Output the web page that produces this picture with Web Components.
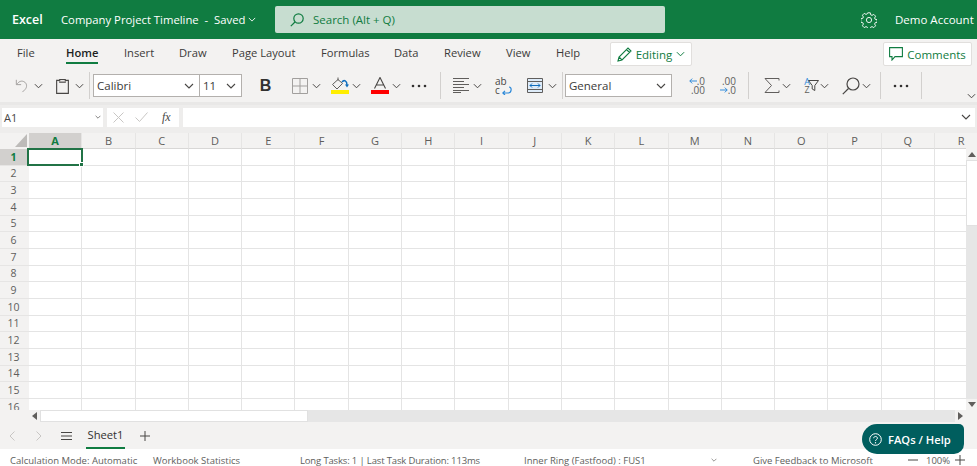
<!DOCTYPE html>
<html lang="en">
<head>
<meta charset="utf-8">
<title>Excel</title>
<style>
  html, body { margin: 0; height: 466px; overflow: hidden; background: #f3f2f1; }
  body { font-family: "Open Sans", "Noto Sans", "Liberation Sans", sans-serif; color: #323130; }
</style>
</head>
<body>
<excel-app></excel-app>
<script>
// dibujos de los iconos, cada uno en su propio viewBox
const ICONS = {
  chevron: [10, 6, '<path d="M1 1l4 4 4-4" fill="none" stroke="currentColor" stroke-width="1.1"/>'],
  undo: [16, 16, '<path d="M1.5 1.5v5.5h5.5M2 7c2-3.5 5-4.800 8-3.500 4 1.800 4 6.500 1.500 9L8.500 15.500" fill="none" stroke="#a19f9d" stroke-width="1.100"/>'],
  paste: [14, 17, '<path d="M4 2.500H.7v14h12.600v-14H10M4 1.500h6v3H4z" fill="none" stroke="#484644" stroke-width="1.200"/><path d="M3 3.500h8" stroke="#a19f9d"/>'],
  borders: [16, 16, '<path d="M.5.500h15v15H.500zM8 .5v15M.5 8h15" fill="none" stroke="#a19f9d" stroke-width="1"/>'],
  fill: [18, 17, '<path d="M7 .5v3M7 2.500l-5.500 5 4.500 4.500 5.500-5.500z" fill="none" stroke="#605e5c"/><path d="M11 5c2-2.500 5-1.500 5 3" fill="none" stroke="#106ebe" stroke-width="1.500"/><path d="M14 7.500l2 3 2-3z" fill="#106ebe"/><rect y="13" width="18" height="4" fill="#ffee00"/>'],
  fontcolor: [18, 17, '<path d="M3.500 11.500L9 .5l5.500 11M5.500 8h7" fill="none" stroke="#484644" stroke-width="1.100"/><rect y="13" width="18" height="4" fill="#f00"/>'],
  dots: [16, 4, '<circle cx="2" cy="2" r="1.300" fill="currentColor"/><circle cx="8" cy="2" r="1.300" fill="currentColor"/><circle cx="14" cy="2" r="1.300" fill="currentColor"/>'],
  align: [16, 15, '<path d="M0 .5h16M0 3.500h11M0 6.500h16M0 9.500h11M0 12.500h16M0 14.500h8" stroke="#605e5c" fill="none"/>'],
  merge: [16, 15, '<path d="M.5.500h15v14H.500z" fill="#deecf9" stroke="#605e5c"/><path d="M.5 3.500h15M.5 11.500h15" stroke="#605e5c"/><path d="M3 7.500h10M5 5.500l-2 2 2 2M11 5.500l2 2-2 2" fill="none" stroke="#106ebe"/>'],
  wrapArrow: [10, 9, '<path d="M1 7h5c4 0 4-6 1-6M3 4.800L.8 7 3 9" fill="none" stroke="#2b88d8" stroke-width="1.200"/>'],
  arrowL: [10, 7, '<path d="M10 3.500H1M4 .5l-3 3 3 3" fill="none" stroke="#2b88d8" stroke-width="1.200"/>'],
  arrowR: [10, 7, '<path d="M0 3.500h9M6 .5l3 3-3 3" fill="none" stroke="#2b88d8" stroke-width="1.200"/>'],
  sigma: [16, 15, '<path d="M15 2.500V.5H1l6.500 7-6.500 7h14v-2" fill="none" stroke="#605e5c"/>'],
  filter: [11, 11, '<path d="M.5.500h10L6.800 5.500v5l-2.600-1.500V5.500z" fill="none" stroke="#484644"/>'],
  find: [18, 18, '<circle cx="11" cy="7" r="6" fill="none" stroke="#484644" stroke-width="1.200"/><path d="M6.500 11.500L.8 17.200" stroke="#484644" stroke-width="1.200"/>'],
  search: [14, 14, '<circle cx="8.500" cy="5.500" r="4.700" fill="none" stroke="#107c41" stroke-width="1.200"/><path d="M5 9L.8 13.200" stroke="#107c41" stroke-width="1.200"/>'],
  gear: [16, 16, '<path d="M6.700.800h2.600l.4 2 1.300.6 1.800-1 1.800 1.800-1 1.800.6 1.300 2 .4v2.600l-2 .4-.6 1.300 1 1.800-1.800 1.800-1.800-1-1.300.6-.4 2H6.700l-.4-2-1.300-.6-1.800 1-1.800-1.800 1-1.800-.6-1.300-2-.4V6.700l2-.4.6-1.300-1-1.800 1.800-1.800 1.800 1 1.300-.6z" fill="none" stroke="#fff" stroke-width=".9"/><circle cx="8" cy="8" r="2.600" fill="none" stroke="#fff" stroke-width=".9"/>'],
  pencil: [15, 15, '<path d="M1 14l1-4L11 1l3 3-9 9zM2 10l3 3M9.500 2.500l3 3" fill="none" stroke="#107c41" stroke-width="1.100"/>'],
  comment: [14, 14, '<path d="M.6.600h12.800v9H6L3 13V9.600H.6z" fill="none" stroke="#107c41" stroke-width="1.100"/>'],
  cross: [11, 11, '<path d="M.5.500l10 10M10.500.500l-10 10" stroke="#c8c6c4" fill="none"/>'],
  check: [13, 10, '<path d="M.5 5.500l4 4 8-9" stroke="#c8c6c4" fill="none"/>'],
  left: [6, 10, '<path d="M5.500.5L1 5l4.500 4.500" fill="none" stroke="#c8c6c4"/>'],
  right: [6, 10, '<path d="M.5.500L5 5 .5 9.500" fill="none" stroke="#c8c6c4"/>'],
  menu: [11, 8, '<path d="M0 .5h11M0 4h11M0 7.500h11" stroke="#484644"/>'],
  plus: [10, 10, '<path d="M5 0v10M0 5h10" stroke="#484644"/>'],
  minus: [10, 10, '<path d="M0 5h10" stroke="#484644"/>'],
  help: [13, 13, '<circle cx="6.500" cy="6.500" r="5.800" fill="none" stroke="#fff"/><path d="M4.700 5.200c0-2.300 3.700-2.300 3.700 0 0 1.300-1.900 1.400-1.900 2.800" fill="none" stroke="#fff"/><circle cx="6.500" cy="9.700" r=".7" fill="#fff"/>'],
  up: [8, 5, '<path d="M0 5l4-5 4 5z" fill="currentColor"/>'],
  down: [8, 5, '<path d="M0 0l4 5 4-5z" fill="currentColor"/>'],
  back: [5, 8, '<path d="M5 0L0 4l5 4z" fill="currentColor"/>'],
  fwd: [5, 8, '<path d="M0 0l5 4-5 4z" fill="currentColor"/>'],
};

class ExcelIcon extends HTMLElement {
  connectedCallback() {
    const name = this.getAttribute("name");
    const [w, h, body] = ICONS[name];
    const dw = this.getAttribute("w") || w;
    const dh = this.getAttribute("h") || h;
    this.attachShadow({ mode: "open" }).innerHTML = `
      <style>:host { display: inline-flex; flex: none; } svg { display: block; }</style>
      <svg width="${dw}" height="${dh}" viewBox="0 0 ${w} ${h}">${body}</svg>`;
  }
}
customElements.define("excel-icon", ExcelIcon);

// caja de seleccion del ribbon (fuente, tamano, formato)
class ExcelSelect extends HTMLElement {
  connectedCallback() {
    this.attachShadow({ mode: "open" }).innerHTML = `
      <style>
        :host { display: flex; flex: none; align-items: center; box-sizing: border-box; height: 23px;
                background: #fff; border: 1px solid #b3b0ad; padding: 0 5px 0 3px; font-size: 11.500px; color: #3b3a39; }
        span { flex: 1; }
      </style>
      <span><slot></slot></span>
      <excel-icon name="chevron" style="color:#484644"></excel-icon>`;
  }
}
customElements.define("excel-select", ExcelSelect);

class ExcelTitlebar extends HTMLElement {
  constructor() {
    super();
    this.attachShadow({ mode: "open" }).innerHTML = `
      <style>
        :host { display: flex; flex: none; align-items: center; height: 39px; background: #107c41; color: #fff; font-size: 11.300px; }
        .app { font-weight: 600; font-size: 12.500px; margin-left: 12px; width: 49px; }
        .doc { display: flex; align-items: center; gap: 3px; width: 214px; white-space: pre; }
        .search { display: flex; align-items: center; box-sizing: border-box; width: 390px; height: 27px; padding-left: 15px; gap: 9px;
                  background: #c7ddd0; border-radius: 2px; color: #107c41; font-size: 11.500px; }
        .gear { margin-left: 196px; }
        .user { margin-left: 18px; font-size: 11.500px; }
      </style>
      <span class="app">Excel</span>
      <span class="doc">Company Project Timeline  -  Saved<excel-icon name="chevron" w="8" h="5"></excel-icon></span>
      <div class="search"><excel-icon name="search"></excel-icon>Search (Alt + Q)</div>
      <excel-icon class="gear" name="gear"></excel-icon>
      <span class="user">Demo Account</span>`;
  }
}
customElements.define("excel-titlebar", ExcelTitlebar);

class ExcelTabs extends HTMLElement {
  constructor() {
    super();
    const tabs = [["File", 17, 17], ["Home", 32, 32], ["Insert", 28, 26], ["Draw", 26, 27], ["Page Layout", 63, 27], ["Formulas", 47, 26], ["Data", 24, 26], ["Review", 36, 26], ["View", 24, 26], ["Help", 24, 26]];
    const html = tabs.map(([t, w, m]) => `<span class="tab${t === "Home" ? " on" : ""}" style="width:${w}px;margin-left:${t === "Home" ? 32 : m}px">${t}</span>`).join("");
    this.attachShadow({ mode: "open" }).innerHTML = `
      <style>
        :host { display: flex; flex: none; align-items: flex-start; height: 30px; font-size: 11.200px; color: #3b3a39; }
        .tab { display: block; height: 25px; line-height: 27px; text-align: center; white-space: nowrap; position: relative; }
        .on { font-weight: 600; color: #201f1e; border-bottom: 2px solid #107c41; height: 23px; }
        .btn { display: flex; align-items: center; justify-content: center; gap: 4px; box-sizing: border-box; height: 24px; margin-top: 3px;
               background: #fff; border: 1px solid #e1dfdd; border-radius: 2px; color: #107c41; font-size: 11.500px; }
        .edit { width: 82px; margin-left: 30px; }
        .comm { width: 89px; margin-left: 191px; }
      </style>
      ${html}
      <div class="btn edit"><excel-icon name="pencil"></excel-icon>Editing <excel-icon name="chevron" w="9" h="6"></excel-icon></div>
      <div class="btn comm"><excel-icon name="comment"></excel-icon>Comments</div>`;
  }
}
customElements.define("excel-tabs", ExcelTabs);

class ExcelToolbar extends HTMLElement {
  constructor() {
    super();
    const chev = (m) => `<excel-icon name="chevron" w="9" h="6" style="margin-left:${m}px;color:#484644"></excel-icon>`;
    const sep = (m) => `<i class="sep" style="margin-left:${m}px"></i>`;
    this.attachShadow({ mode: "open" }).innerHTML = `
      <style>
        :host { display: flex; flex: none; align-items: center; height: 33px; padding-bottom: 0; }
        .sep { display: block; flex: none; width: 1px; height: 27px; background: #d2d0ce; }
        .bold { font: 700 16px "Liberation Sans", sans-serif; color: #323130; width: 13px; margin-left: 17px; text-align: center; }
        .wrap { position: relative; width: 16px; height: 18px; margin-left: 13px; font: 10px/9px "Open Sans", sans-serif; color: #484644; flex: none; }
        .wrap excel-icon { position: absolute; left: 7px; top: 9px; }
        .wrap span { display: block; }
        .dec { flex: none; width: 17px; font: 10px/8.500px "Open Sans", sans-serif; color: #605e5c; text-align: right; }
        .dec excel-icon { vertical-align: 1px; }
        .sort { flex: none; width: 8px; margin-left: 12px; font: 9px/8px "Open Sans", sans-serif; color: #605e5c; text-align: center; }
        .sort b { display: block; font-weight: 400; color: #2b88d8; }
      </style>
      <excel-icon name="undo" w="14" h="15" style="margin-left:15px"></excel-icon>${chev(5)}
      <excel-icon name="paste" w="13" h="16" style="margin-left:13px"></excel-icon>${chev(6)}
      ${sep(5)}
      <excel-select style="width:107px;margin-left:3px">Calibri</excel-select>
      <excel-select style="width:43px;margin-left:-1px">11</excel-select>
      <span class="bold">B</span>
      <excel-icon name="borders" style="margin-left:20px"></excel-icon>${chev(4)}
      <excel-icon name="fill" style="margin-left:10px"></excel-icon>${chev(3)}
      <excel-icon name="fontcolor" style="margin-left:10px"></excel-icon>${chev(3)}
      <excel-icon name="dots" style="margin-left:10px;color:#323130"></excel-icon>
      ${sep(13)}
      <excel-icon name="align" style="margin-left:12px"></excel-icon>${chev(4)}
      <div class="wrap"><span>ab</span><span>c</span><excel-icon name="wrapArrow"></excel-icon></div>
      <excel-icon name="merge" style="margin-left:16px"></excel-icon>${chev(5)}
      ${sep(5)}
      <excel-select style="width:107px;margin-left:2px">General</excel-select>
      <div class="dec" style="margin-left:16px"><excel-icon name="arrowL" w="8" h="6"></excel-icon>.0<br>.00</div>
      <div class="dec" style="margin-left:14px">.00<br><excel-icon name="arrowR" w="8" h="6"></excel-icon>.0</div>
      ${sep(12)}
      <excel-icon name="sigma" style="margin-left:15px"></excel-icon>${chev(2)}
      <div class="sort"><b>A</b>Z</div>
      <excel-icon name="filter" style="margin-left:-3px"></excel-icon>${chev(1)}
      <excel-icon name="find" style="margin-left:13px"></excel-icon>${chev(2)}
      ${sep(9)}
      <excel-icon name="dots" style="margin-left:12px;color:#323130"></excel-icon>
      ${sep(12)}
      <excel-icon name="chevron" w="9" h="6" style="margin-left:45px;margin-top:20px;color:#484644"></excel-icon>`;
  }
}
customElements.define("excel-toolbar", ExcelToolbar);

class ExcelFormulabar extends HTMLElement {
  constructor() {
    super();
    this.attachShadow({ mode: "open" }).innerHTML = `
      <style>
        :host { display: flex; flex: none; align-items: center; gap: 3px; box-sizing: border-box; height: 31px; padding: 0 2px 4px;
                background: #eeedec; border-top: 3px solid #e9e8e7; font-size: 11px; color: #484644; }
        .box { display: flex; align-items: center; height: 19px; background: #fff; flex: none; box-sizing: border-box; }
        .name { width: 101px; padding: 0 2px; justify-content: space-between; }
        .fn { width: 72px; padding-left: 6px; gap: 11px; margin-left: 1px; }
        .fn i { font: italic 12px "Liberation Serif", serif; color: #484644; margin-left: 3px; }
        .val { flex: 1; justify-content: flex-end; padding-right: 4px; margin-left: 1px; }
      </style>
      <div class="box name">A1<excel-icon name="chevron" w="6" h="4"></excel-icon></div>
      <div class="box fn"><excel-icon name="cross"></excel-icon><excel-icon name="check"></excel-icon><i>fx</i></div>
      <div class="box val"><excel-icon name="chevron" w="10" h="6"></excel-icon></div>`;
  }
}
customElements.define("excel-formulabar", ExcelFormulabar);

class ExcelSheet extends HTMLElement {
  constructor() {
    super();
    const cols = "ABCDEFGHIJKLMNOPQR".split("");
    const head = cols.map((c, i) => `<div class="ch${i === 0 ? " sel" : ""}">${c}</div>`).join("");
    let rows = "";
    for (let r = 1; r <= 16; r++) {
      rows += `<div class="rh${r === 1 ? " sel" : ""}">${r}</div>` + cols.map(() => `<div class="c"></div>`).join("");
    }
    this.attachShadow({ mode: "open" }).innerHTML = `
      <style>
        :host { display: block; flex: none; position: relative; height: 289px; background: #f3f2f1; overflow: hidden; }
        .view { height: 277px; overflow: hidden; margin-right: 11px; }
        .grid { display: grid; grid-template-columns: 29px repeat(18, 53.300px); grid-template-rows: 16px repeat(16, 16.660px); width: max-content; font-size: 10.500px; color: #605e5c; }
        .corner { background: #f3f2f1; position: relative; }
        .corner::after { content: ""; position: absolute; right: 2px; bottom: 2px; border-style: solid; border-width: 0 0 13px 12px; border-color: transparent transparent #bdbbb9 transparent; }
        .ch { display: flex; align-items: center; justify-content: center; box-sizing: border-box; border-right: 1px solid #e6e5e4; border-bottom: 1px solid #d8d7d6; font-size: 11px; }
        .rh { display: flex; align-items: center; justify-content: center; box-sizing: border-box; padding-right: 2px; border-bottom: 1px solid #e6e5e4; background: #f3f2f1; }
        .sel { background: #d2d0ce; color: #107c41; font-weight: 700; }
        .c { background: #fff; box-sizing: border-box; border-right: 1px solid #e4e4e4; border-bottom: 1px solid #e4e4e4; }
        .cursor { position: absolute; left: 27px; top: 15px; width: 52px; height: 14px; border: 2px solid #217346; box-sizing: content-box; }
        .cursor::after { content: ""; position: absolute; right: -3px; bottom: -3px; width: 3px; height: 3px; background: #217346; border: 1px solid #fff; }
        .vbar { position: absolute; right: 0; top: 16px; bottom: 12px; width: 11px; display: flex; flex-direction: column; background: #e6e6e6; color: #605e5c; }
        .vbar div { display: flex; justify-content: center; align-items: center; height: 11px; background: #f3f2f1; flex: none; }
        .vbar .thumb { height: 66px; background: #fff; border: 1px solid #e1e1e1; border-right: 0; box-sizing: border-box; }
        .vbar .end { margin-top: auto; }
        .hbar { position: absolute; left: 29px; right: 11px; bottom: 0; height: 12px; display: flex; background: #e6e6e6; color: #605e5c; }
        .hbar div { display: flex; justify-content: center; align-items: center; width: 11px; background: #f3f2f1; flex: none; }
        .hbar .thumb { width: 268px; background: #fff; border: 1px solid #e1e1e1; box-sizing: border-box; }
        .hbar .end { margin-left: auto; }
      </style>
      <div class="view"><div class="grid"><div class="corner"></div>${head}${rows}</div></div>
      <div class="cursor"></div>
      <div class="vbar">
        <div><excel-icon name="up"></excel-icon></div><div class="thumb"></div>
        <div class="end"><excel-icon name="down"></excel-icon></div>
      </div>
      <div class="hbar">
        <div><excel-icon name="back"></excel-icon></div><div class="thumb"></div>
        <div class="end"><excel-icon name="fwd"></excel-icon></div>
      </div>`;
  }
}
customElements.define("excel-sheet", ExcelSheet);

class ExcelSheetbar extends HTMLElement {
  constructor() {
    super();
    this.attachShadow({ mode: "open" }).innerHTML = `
      <style>
        :host { display: flex; flex: none; align-items: center; height: 27px; background: #f3f2f1; font-size: 11.200px; color: #323130; }
        .tab { display: flex; align-items: center; justify-content: center; box-sizing: border-box; width: 39px; height: 27px; margin-left: 14px; border-bottom: 2px solid #107c41; font-weight: 500; }
      </style>
      <excel-icon name="left" style="margin-left:9px"></excel-icon>
      <excel-icon name="right" style="margin-left:21px"></excel-icon>
      <excel-icon name="menu" style="margin-left:19px"></excel-icon>
      <div class="tab">Sheet1</div>
      <excel-icon name="plus" style="margin-left:15px"></excel-icon>`;
  }
}
customElements.define("excel-sheetbar", ExcelSheetbar);

class ExcelStatusbar extends HTMLElement {
  constructor() {
    super();
    this.attachShadow({ mode: "open" }).innerHTML = `
      <style>
        :host { display: flex; flex: none; align-items: center; box-sizing: border-box; height: 17px; padding-top: 5px; background: #fff; font-size: 9.500px; color: #605e5c; white-space: nowrap; }
        span { display: block; flex: none; }
      </style>
      <span style="width:143px;margin-left:10px">Calculation Mode: Automatic</span>
      <span style="width:147px">Workbook Statistics</span>
      <span style="width:224px;letter-spacing:-.15px">Long Tasks: 1 | Last Task Duration: 113ms</span>
      <span style="width:187px">Inner Ring (Fastfood) : FUS1</span>
      <excel-icon name="chevron" w="6" h="4"></excel-icon>
      <span style="width:155px;margin-left:36px">Give Feedback to Microsoft</span>
      <excel-icon name="minus"></excel-icon>
      <span style="margin-left:8px;width:29px">100%</span>
      <excel-icon name="plus"></excel-icon>`;
  }
}
customElements.define("excel-statusbar", ExcelStatusbar);

class ExcelHelp extends HTMLElement {
  constructor() {
    super();
    this.attachShadow({ mode: "open" }).innerHTML = `
      <style>
        :host { position: absolute; left: 862px; top: 424px; width: 102px; height: 30px; box-sizing: border-box; display: flex; align-items: center; padding-left: 7px; gap: 6px;
                background: #005e5e; color: #fff; border-radius: 15px 5px 10px 15px; font-size: 11.200px; font-weight: 600; }
      </style>
      <excel-icon name="help"></excel-icon>FAQs / Help`;
  }
}
customElements.define("excel-help", ExcelHelp);

class ExcelApp extends HTMLElement {
  constructor() {
    super();
    this.attachShadow({ mode: "open" }).innerHTML = `
      <style>:host { display: flex; flex-direction: column; width: 977px; height: 466px; position: relative; overflow: hidden; }</style>
      <excel-titlebar></excel-titlebar>
      <excel-tabs></excel-tabs>
      <excel-toolbar></excel-toolbar>
      <excel-formulabar></excel-formulabar>
      <excel-sheet></excel-sheet>
      <excel-sheetbar></excel-sheetbar>
      <excel-statusbar></excel-statusbar>
      <excel-help></excel-help>`;
  }
}
customElements.define("excel-app", ExcelApp);
</script>
</body>
</html>
